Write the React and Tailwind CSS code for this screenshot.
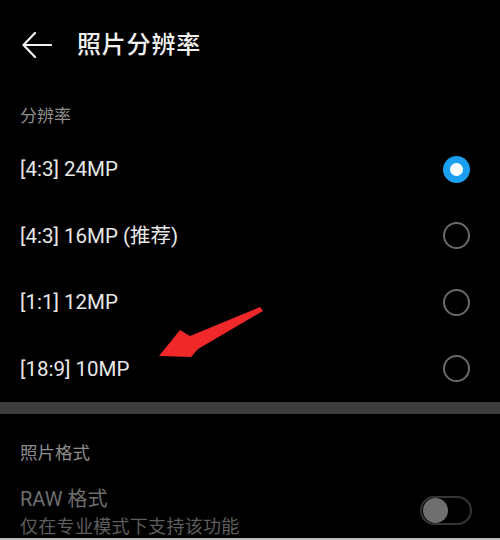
import React from "react";

const rows = [
  { label: "[4:3] 24MP", selected: true },
  { label: "[4:3] 16MP (推荐)", selected: false },
  { label: "[1:1] 12MP", selected: false },
  { label: "[18:9] 10MP", selected: false },
];

function Radio({ selected }) {
  if (selected) {
    return (
      <div className="w-[27px] h-[27px] rounded-full bg-[#1b9ff0] flex items-center justify-center">
        <div className="w-[13px] h-[13px] rounded-full bg-white" />
      </div>
    );
  }
  return <div className="w-[27px] h-[27px] rounded-full border-2 border-[#6a6a6a]" />;
}

export default function App() {
  return (
    <div
      className="relative w-[500px] h-[540px] bg-black overflow-hidden flex flex-col"
      style={{ fontFamily: 'Roboto, "Noto Sans CJK SC", sans-serif' }}
    >
      {/* Header */}
      <div className="h-[90px] flex items-center pl-[22px] shrink-0">
        <svg width="30" height="28" viewBox="0 0 30 28" className="shrink-0">
          <path d="M13 2 L1.5 14 L13 26 M1.5 14 H29" stroke="#f2f2f2" strokeWidth="2.2" fill="none" strokeLinecap="round" strokeLinejoin="round" />
        </svg>
        <div className="ml-[25px] text-[24px] leading-[30px] text-[#f0f0f0] font-medium tracking-[0.8px]">照片分辨率</div>
      </div>

      {/* Section label */}
      <div className="h-[46px] pt-[6px] flex items-center pl-[20px] shrink-0">
        <span className="text-[17px] leading-[20px] text-[#8e8e8e]">分辨率</span>
      </div>

      {/* Rows */}
      {rows.map((r) => (
        <div key={r.label} className="h-[66.5px] flex items-center justify-between pl-[20px] pr-[30px] shrink-0">
          <span className="text-[20.5px] leading-[24px] text-[#e8e8e8]">{r.label}</span>
          <Radio selected={r.selected} />
        </div>
      ))}

      {/* Divider band */}
      <div className="h-[12px] bg-[#3d3d3d] shrink-0" />

      {/* Photo format */}
      <div className="pt-[29px] pl-[20px] shrink-0">
        <span className="block text-[17.5px] leading-[20px] text-[#8e8e8e]">照片格式</span>
      </div>

      <div className="flex items-center justify-between pl-[20px] pr-[28px] pt-[25px] shrink-0">
        <div className="flex flex-col">
          <span className="text-[20px] leading-[22px] text-[#6e6e6e]">RAW 格式</span>
          <span className="mt-[7px] text-[18px] leading-[20px] text-[#5e5e5e] tracking-[0.3px]">仅在专业模式下支持该功能</span>
        </div>
        <div className="w-[52px] h-[29px] rounded-full border-2 border-[#353535] flex items-center pl-[1px] mb-[5px]">
          <div className="w-[25px] h-[25px] rounded-full bg-[#6f6f6f]" />
        </div>
      </div>

      <div className="mt-auto h-[2px] bg-[#bdbdbd] shrink-0" />

      {/* Red annotation arrow */}
      <svg
        className="absolute left-0 top-0 pointer-events-none"
        width="500"
        height="540"
        viewBox="0 0 500 540"
      >
        <polygon
          points="260,307 263,311 198,349 191,357 159,356 180,330 190,336"
          fill="#f0282a"
        />
      </svg>
    </div>
  );
}
